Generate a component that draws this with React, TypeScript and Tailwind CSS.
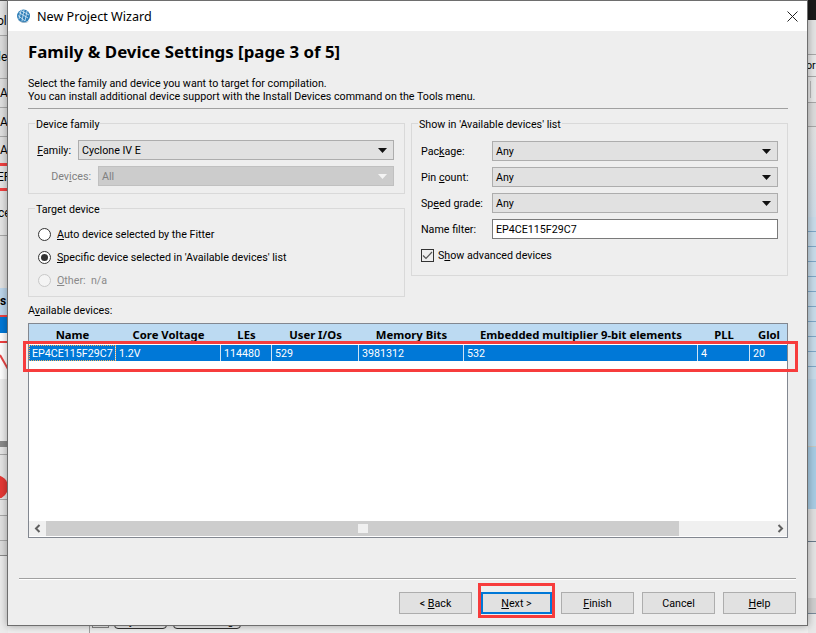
import React from "react";

const font = "font-['Roboto','Noto_Sans',sans-serif]";
const boldFont = "font-['Noto_Sans',sans-serif] font-bold";

function Arrow({ disabled }: { disabled?: boolean }) {
  return (
    <svg width="9" height="5" viewBox="0 0 9 5" className="shrink-0">
      <path d="M0 0H9L4.5 5Z" fill={disabled ? "#f4f4f4" : "#111"} />
    </svg>
  );
}

function Combo({ value, disabled, width }: { value: string; disabled?: boolean; width: string }) {
  return (
    <div
      className={`${width} h-5 flex items-center justify-between pl-[3px] pr-[3px] border ${
        disabled ? "bg-[#cccccc] border-[#c0c0c0] text-[#808080]" : "bg-[#e1e1e1] border-[#adadad] text-black"
      }`}
    >
      <span>{value}</span>
      <span className="w-[14px] flex justify-center mr-[1px]">
        <Arrow disabled={disabled} />
      </span>
    </div>
  );
}

function Legend({ children }: { children: React.ReactNode }) {
  return (
    <span className="absolute -top-[6px] left-[6px] bg-[#eeeeee] px-[1px] leading-[14px] whitespace-nowrap">{children}</span>
  );
}

function Radio({ state, children }: { state: "off" | "on" | "disabled"; children: React.ReactNode }) {
  const ring = state === "disabled" ? "border-[#c8c8c8] bg-[#f4f4f4]" : "border-[#333333] bg-white";
  return (
    <div className={`h-[23px] flex items-center gap-[6px] ${state === "disabled" ? "text-[#8a8a8a]" : "text-black"}`}>
      <span className={`w-[13px] h-[13px] rounded-full border flex items-center justify-center ${ring}`}>
        {state === "on" && <span className="w-[7px] h-[7px] rounded-full bg-[#333333]" />}
      </span>
      <span>{children}</span>
    </div>
  );
}

function Btn({ children, focus, w }: { children: React.ReactNode; focus?: boolean; w: string }) {
  return (
    <div
      className={`${w} h-[22px] flex items-center justify-center bg-[#e1e1e1] ${
        focus ? "border-2 border-[#0078d7]" : "border border-[#adadad]"
      }`}
    >
      <span>{children}</span>
    </div>
  );
}

const cols = [
  { w: "w-[87px]", head: "Name", cell: "EP4CE115F29C7" },
  { w: "w-[105px]", head: "Core Voltage", cell: "1.2V" },
  { w: "w-[51px]", head: "LEs", cell: "114480" },
  { w: "w-[87px]", head: "User I/Os", cell: "529" },
  { w: "w-[105px]", head: "Memory Bits", cell: "3981312" },
  { w: "w-[234px]", head: "Embedded multiplier 9-bit elements", cell: "532" },
  { w: "w-[52px]", head: "PLL", cell: "4" },
  { w: "w-[38px]", head: "Glol", cell: "20" },
];

function GlobeIcon() {
  return (
    <svg width="15" height="15" viewBox="0 0 15 15" className="shrink-0">
      <circle cx="7.5" cy="7" r="6.5" fill="#2f7fb8" />
      <path d="M1.5 10C4 13 9 14 13 12 11 14.5 5 15.5 1.5 10Z" fill="#9fb4c4" />
      <path d="M3 3.5L12 9M5 1.5L13 6M2 6.5L9 12M5 1.5L3 10M8 1L6 12M11 2L9 12" stroke="#d8ebf7" strokeWidth="0.8" fill="none" />
    </svg>
  );
}

function LeftStrip() {
  const row = "border-b border-[#a8a8a8] overflow-hidden flex items-center text-[12px] text-black";
  return (
    <div className="w-[8px] h-full shrink-0 bg-[#ececec] flex flex-col overflow-hidden">
      <div className="h-[1px] bg-[#555555]" />
      <div className={`h-[35px] ${row} bg-[#e4e4e4] pt-[6px]`}><span className="-ml-[3px]">ol</span></div>
      <div className={`h-[43px] ${row} bg-[#dddddd]`}><span className="-ml-[2px]">le</span></div>
      <div className={`h-[29px] ${row} bg-[#e0e0e0]`}><span>Ar</span></div>
      <div className={`h-[29px] ${row} bg-[#e0e0e0]`}><span>Ar</span></div>
      <div className="h-[26px] bg-[#e0e0e0] flex items-center text-[12px]"><span>Ar</span></div>
      <div className="h-[3px] bg-[#f04040]" />
      <div className="h-[22px] bg-[#e6e6e6] flex items-center text-[12px]"><span className="-ml-[3px]">EF</span></div>
      <div className="h-[3px] bg-[#f04040]" />
      <div className={`h-[45px] ${row} bg-[#e6e6e6]`}><span className="-ml-[2px]">ce</span></div>
      <div className="h-[52px] bg-[#e2e2e2]" />
      <div className="h-[27px] bg-[#bcd6ec] flex items-center text-[12px] font-bold"><span>s</span></div>
      <div className="h-[2px] bg-[#f04040]" />
      <div className="h-[16px] bg-[#0078d7]" />
      <div className="h-[8px] bg-white" />
      <div className="h-[2px] bg-[#f04040]" />
      <div className="h-[36px] bg-white overflow-hidden">
        <svg width="8" height="36" viewBox="0 0 8 36"><path d="M0 12L8 26" stroke="#e84545" strokeWidth="2" fill="none" /></svg>
      </div>
      <div className="h-[62px] bg-[#eeeeee]" />
      <div className="h-[6px] bg-[#8a8a8a]" />
      <div className="h-[8px] bg-[#e6e6e6] border-b border-[#a8a8a8]" />
      <div className="relative h-[45px] bg-[#e6e6e6] border-b border-[#a8a8a8] overflow-hidden">
        <span className="absolute -left-[16px] top-[20px] w-[24px] h-[24px] rounded-full bg-[#e53935]" />
      </div>
      <div className="h-[16px] bg-[#e6e6e6] border-b border-[#a8a8a8]" />
      <div className="h-[25px] bg-[#e2e2e2] border-b border-[#a8a8a8]" />
      <div className="h-[15px] bg-[#dcdcdc] border-b border-[#8a8a8a]" />
      <div className="flex-1 bg-[#ececec]" />
    </div>
  );
}

function RightStrip() {
  return (
    <div className="w-[8px] shrink-0 flex flex-col bg-[#ececec] overflow-hidden">
      <div className="h-[20px] bg-[#1a1a1a]" />
      <div className="h-[35px] bg-[#e4e4e4] border-b border-[#a8a8a8]" />
      <div className="h-[22px] bg-[#e8e8e8] border-b border-[#a8a8a8] flex items-center"><span className="-ml-[2px]">or</span></div>
      <div className="h-[26px] bg-[#e8e8e8] border-b border-[#a8a8a8] pl-[2px] py-[4px]">
        <div className="w-[1px] h-full bg-[#b8b8b8]" />
      </div>
      <div className="h-[24px] bg-[#dcdcdc] border-b border-[#a8a8a8]" />
      <div className="h-[90px] bg-gradient-to-b from-[#e2e2e2] to-[#cfdde8]" />
      <div className="h-[162px] bg-[#c8dcea] bg-[repeating-linear-gradient(to_bottom,#c8dcea_0,#c8dcea_14px,#7fa8c8_14px,#7fa8c8_15px)]" />
      <div className="h-[68px] bg-[#bcd6e8] border-b border-[#c8c8c0]" />
      <div className="h-[62px] bg-[#a8cce4]" />
      <div className="h-[33px] bg-[#e0e0e0] border-b border-[#6a7a8a]" />
      <div className="h-[56px] bg-[#e4e4e4]" />
      <div className="h-[16px] bg-[#cfcfcf] border-b border-[#7a8a9a]" />
      <div className="flex-1 bg-[#e8e8e8]" />
    </div>
  );
}

export default function App() {
  return (
    <div className={`relative w-[816px] h-[633px] overflow-hidden bg-[#e9e9e9] text-[10.7px] leading-[13px] text-black ${font}`}>
      {/* application behind the dialog */}
      <div className="absolute inset-0 flex">
        <LeftStrip />
        <div className="flex-1 flex flex-col justify-end">
          <div className="h-[8px] bg-[#f0f0f0] flex items-start pl-[81px] overflow-hidden">
            <div className="w-[1px] h-[8px] bg-[#a0a0a0]" />
            <div className="ml-[2px] w-[17px] h-[3px] border-b border-x border-[#888888]" />
            <div className="ml-[5px] w-[53px] h-[16px] -mt-[12px] border border-[#333333] rounded-[4px] flex items-center justify-center shrink-0">System</div>
            <div className="ml-[6px] w-[68px] h-[16px] -mt-[12px] border border-[#333333] rounded-[4px] flex items-center justify-center shrink-0">Processing</div>
          </div>
        </div>
        <RightStrip />
      </div>

      {/* dialog window */}
      <div className="absolute left-[7px] top-0 w-[801px] h-[626px] border border-[#6e6e6e] bg-[#eeeeee] shadow-[0_0_8px_rgba(0,0,0,0.35)] flex flex-col">
        <div className="h-[30px] shrink-0 bg-white flex items-center justify-between pl-[8px] pr-[9px]">
          <div className="flex items-center gap-[6px] text-[12.6px] font-['Noto_Sans',sans-serif]">
            <GlobeIcon />
            <span>New Project Wizard</span>
          </div>
          <svg width="11" height="11" viewBox="0 0 11 11"><path d="M0.5 0.5L10.5 10.5M10.5 0.5L0.5 10.5" stroke="#222" strokeWidth="1" fill="none" /></svg>
        </div>

        <div className="flex-1 flex flex-col pl-[20px] pr-[19px]">
          <h1 className={`mt-[11px] h-[20px] text-[16.85px] leading-[20px] ${boldFont}`}>Family &amp; Device Settings [page 3 of 5]</h1>
          <div className="mt-[15px] h-[26px]">
            <div>Select the family and device you want to target for compilation.</div>
            <div>You can install additional device support with the Install Devices command on the Tools menu.</div>
          </div>
          <div className="mt-[5px] h-[1px] bg-[#a0a0a0]" />

          <div className="mt-[14px] h-[174px] flex gap-[6px]">
            <div className="w-[377px] flex flex-col gap-[14px]">
              <div className="relative h-[71px] border border-[#d9d9d9] pt-[16px] pr-[10px] flex flex-col gap-[6px]">
                <Legend>Device family</Legend>
                <div className="flex items-center justify-end gap-[7px]">
                  <span><u>F</u>amily:</span>
                  <Combo value="Cyclone IV E" width="w-[316px]" />
                </div>
                <div className="flex items-center justify-end gap-[7px] text-[#808080]">
                  <span>Dev<u>i</u>ces:</span>
                  <Combo value="All" disabled width="w-[296px]" />
                </div>
              </div>
              <div className="relative h-[89px] border border-[#d9d9d9] pl-[9px] pt-[14px]">
                <Legend>Target device</Legend>
                <Radio state="off"><u>A</u>uto device selected by the Fitter</Radio>
                <Radio state="on"><u>S</u>pecific device selected in 'Available devices' list</Radio>
                <Radio state="disabled"><u>O</u>ther:&nbsp; n/a</Radio>
              </div>
            </div>
            <div className="relative w-[377px] h-[153px] border border-[#d9d9d9] pt-[17px] pl-[9px] pr-[9px] flex flex-col gap-[6px]">
              <Legend>Show in 'Available devices' list</Legend>
              <div className="flex items-center justify-between">
                <span className="whitespace-nowrap">Pac<u>k</u>age:</span>
                <Combo value="Any" width="w-[286px]" />
              </div>
              <div className="flex items-center justify-between">
                <span className="whitespace-nowrap">Pin <u>c</u>ount:</span>
                <Combo value="Any" width="w-[286px]" />
              </div>
              <div className="flex items-center justify-between">
                <span className="whitespace-nowrap">Sp<u>e</u>ed grade:</span>
                <Combo value="Any" width="w-[286px]" />
              </div>
              <div className="flex items-center justify-between">
                <span className="whitespace-nowrap">Name filter:</span>
                <div className="w-[286px] h-5 border border-[#7a7a7a] bg-white flex items-center pl-[3px]">EP4CE115F29C7</div>
              </div>
              <div className="flex items-center gap-[4px] mt-[4px]">
                <span className="w-[13px] h-[13px] border border-[#333333] flex items-center justify-center">
                  <svg width="11" height="9" viewBox="0 0 11 9"><path d="M1 4.5L4 7.5L10 1" stroke="#555" strokeWidth="1.2" fill="none" /></svg>
                </span>
                <span>S<u>h</u>ow advanced devices</span>
              </div>
            </div>
          </div>

          <div className="mt-[7px] h-[14px] leading-[14px]">A<u>v</u>ailable devices:</div>

          <div className="mt-[5px] w-[760px] h-[215px] border border-[#828790] bg-white flex flex-col overflow-hidden">
            <div className={`h-[20px] shrink-0 flex bg-[#bcdaf2] text-[11.3px] ${boldFont} overflow-hidden`}>
              {cols.map((c) => (
                <div key={c.head} className={`${c.w} shrink-0 flex items-start justify-center pt-[4px] overflow-hidden whitespace-nowrap`}>
                  {c.head}
                </div>
              ))}
            </div>
            <div className="h-[16px] shrink-0 mt-[1px] flex bg-[#0078d7] text-white">
              {cols.map((c, i) => (
                <div
                  key={c.head}
                  className={`${c.w} shrink-0 flex items-center pl-[3px] whitespace-nowrap ${i < 7 ? "border-r border-[#cfe3f5]" : ""} ${
                    i === 0 ? "outline-1 -outline-offset-1 outline-dotted outline-[#f0b060] pl-[2px]" : ""
                  }`}
                >
                  {c.cell}
                </div>
              ))}
            </div>
            <div className="flex-1" />
            <div className="h-[15px] shrink-0 mb-[1px] flex items-center bg-[#f0f0f0]">
              <div className="w-[17px] flex justify-center">
                <svg width="7" height="9" viewBox="0 0 7 9"><path d="M5.5 1L2 4.5L5.5 8" stroke="#606060" strokeWidth="2" fill="none" /></svg>
              </div>
              <div className="w-[633px] h-[15px] bg-[#cdcdcd] flex items-center justify-center">
                <div className="w-[10px] h-[9px] bg-[#f0f0f0]" />
              </div>
              <div className="flex-1 flex justify-end pr-[3px]">
                <svg width="7" height="9" viewBox="0 0 7 9"><path d="M1.5 1L5 4.5L1.5 8" stroke="#606060" strokeWidth="2" fill="none" /></svg>
              </div>
            </div>
          </div>

          <div className="mt-[40px] -ml-[9px] -mr-[8px] h-[2px] bg-white border-t border-[#a0a0a0]" />

          <div className="mt-[12px] -mr-[8px] flex justify-end">
            <Btn w="w-[73px]">&lt; <u>B</u>ack</Btn>
            <div className="ml-[9px]"><Btn focus w="w-[71px]"><u>N</u>ext &gt;</Btn></div>
            <div className="ml-[9px]"><Btn w="w-[73px]"><u>F</u>inish</Btn></div>
            <div className="ml-[8px]"><Btn w="w-[73px]">Cancel</Btn></div>
            <div className="ml-[8px]"><Btn w="w-[73px]"><u>H</u>elp</Btn></div>
          </div>
        </div>
      </div>

      {/* red annotation boxes */}
      <div className="absolute left-[23px] top-[341px] w-[775px] h-[31px] border-[3px] border-[#f73c3c]" />
      <div className="absolute left-[478px] top-[583px] w-[77px] h-[35px] border-[3px] border-[#f73c3c]" />
    </div>
  );
}
